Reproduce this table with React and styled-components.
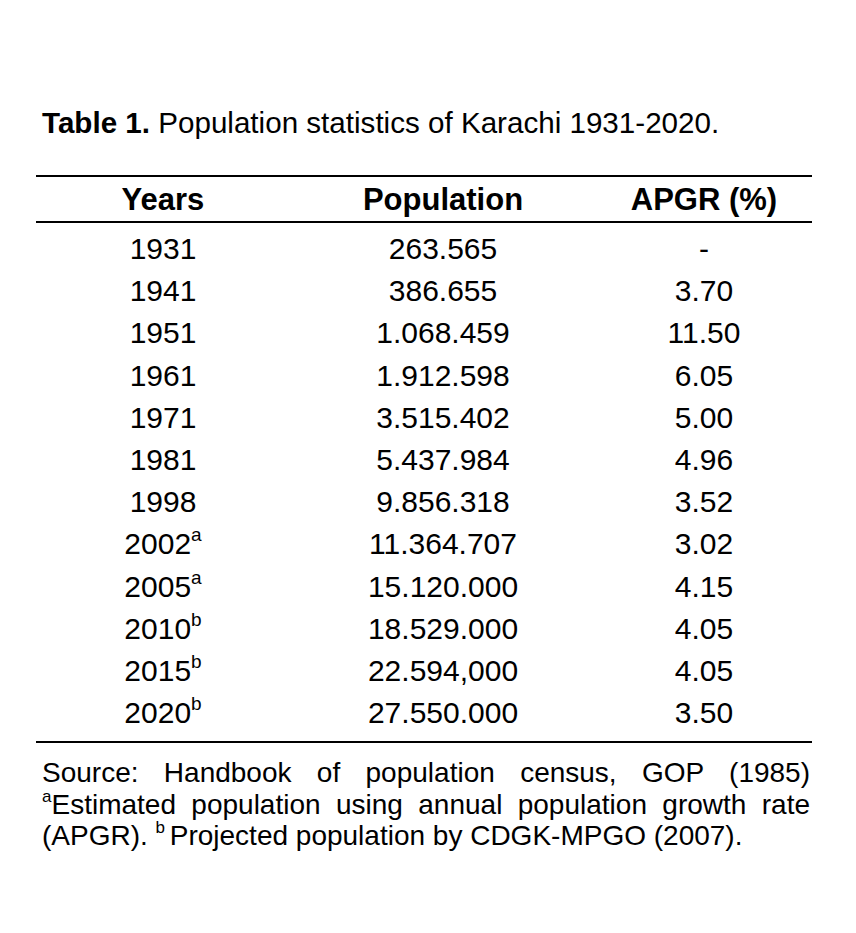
import React from "react";
import styled, { createGlobalStyle } from "styled-components";

const GlobalStyle = createGlobalStyle`
  html, body { margin: 0; padding: 0; background: #fff; }
  body { font-family: "Liberation Sans", Arial, sans-serif; color: #000; }
`;

const Page = styled.div`
  width: 856px;
  height: 933px;
  box-sizing: border-box;
  padding: 106px 44px 0 36px;
`;

const Title = styled.div`
  font-size: 29.6px;
  line-height: 34px;
  padding-left: 6px;
  margin-bottom: 35px;
  white-space: nowrap;
  b { font-weight: 700; }
`;

const Table = styled.div`
  width: 776px;
  border-top: 2px solid #000;
  border-bottom: 2px solid #000;
  padding-bottom: 7px;
`;

const Row = styled.div`
  display: grid;
  grid-template-columns: 254px 306px 216px;
  height: ${(p) => p.$h}px;
  line-height: ${(p) => p.$h}px;
  font-size: ${(p) => (p.$head ? 31 : 30)}px;
  font-weight: ${(p) => (p.$head ? 700 : 400)};
  border-bottom: ${(p) => (p.$head ? "2px solid #000" : "none")};
  margin-bottom: ${(p) => (p.$head ? 5 : 0)}px;
  padding-top: ${(p) => (p.$head ? 2 : 0)}px;
  box-sizing: content-box;
`;

const Cell = styled.div`
  text-align: center;
  white-space: nowrap;
`;

const Sup = styled.sup`
  font-size: 19px;
  line-height: 0;
  vertical-align: 13px;
`;

const Notes = styled.div`
  width: 768px;
  margin: 14px 0 0 6px;
  font-size: 28px;
  line-height: 31.5px;
`;

const NoteLine = styled.p`
  margin: 0;
  text-align: justify;
  text-align-last: ${(p) => (p.$full ? "justify" : "auto")};
`;

const NoteSup = styled.sup`
  font-size: 17px;
  line-height: 0;
  vertical-align: 12px;
`;

const rows = [
  ["1931", "", "263.565", "-"],
  ["1941", "", "386.655", "3.70"],
  ["1951", "", "1.068.459", "11.50"],
  ["1961", "", "1.912.598", "6.05"],
  ["1971", "", "3.515.402", "5.00"],
  ["1981", "", "5.437.984", "4.96"],
  ["1998", "", "9.856.318", "3.52"],
  ["2002", "a", "11.364.707", "3.02"],
  ["2005", "a", "15.120.000", "4.15"],
  ["2010", "b", "18.529.000", "4.05"],
  ["2015", "b", "22.594,000", "4.05"],
  ["2020", "b", "27.550.000", "3.50"],
];

export default function App() {
  return (
    <>
      <GlobalStyle />
      <Page>
        <Title>
          <b>Table 1.</b> Population statistics of Karachi 1931-2020.
        </Title>
        <Table>
          <Row $head $h={42}>
            <Cell>Years</Cell>
            <Cell>Population</Cell>
            <Cell>APGR (%)</Cell>
          </Row>
          {rows.map(([y, s, p, g]) => (
            <Row key={y} $h={42.2}>
              <Cell>
                {y}
                {s && <Sup>{s}</Sup>}
              </Cell>
              <Cell>{p}</Cell>
              <Cell>{g}</Cell>
            </Row>
          ))}
        </Table>
        <Notes>
          <NoteLine $full>Source: Handbook of population census, GOP (1985)</NoteLine>
          <NoteLine>
            <NoteSup>a</NoteSup>Estimated population using annual population growth rate
            (APGR). <NoteSup>b </NoteSup>Projected population by CDGK-MPGO (2007).
          </NoteLine>
        </Notes>
      </Page>
    </>
  );
}
